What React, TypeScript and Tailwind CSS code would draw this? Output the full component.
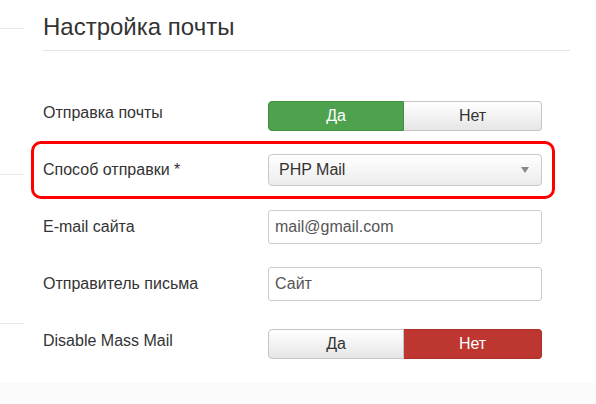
import React from "react";

type Toggle = "yes" | "no";

function YesNo({ value }: { value: Toggle }) {
  const yes = value === "yes";
  return (
    <div className="mt-[7px] flex h-[30px] w-[274px] text-[16px]">
      <div
        className={`flex w-[136px] items-center justify-center rounded-l-[4px] border ${
          yes
            ? "border-[#3f8f3f] bg-[#4ea24e] text-white"
            : "border-[#c5c5c5] bg-gradient-to-b from-white to-[#e6e6e6] text-[#333]"
        }`}
      >
        Да
      </div>
      <div
        className={`flex flex-1 items-center justify-center rounded-r-[4px] border border-l-0 ${
          yes
            ? "border-[#c5c5c5] bg-gradient-to-b from-white to-[#e6e6e6] text-[#333]"
            : "border-[#a92f29] bg-[#bd362f] text-white"
        }`}
      >
        Нет
      </div>
    </div>
  );
}

function TextBox({ value }: { value: string }) {
  return (
    <div className="flex h-[34px] w-[274px] items-center rounded-[3px] border border-[#cccccc] bg-white px-[6px] text-[16px] text-[#555]">
      {value}
    </div>
  );
}

function Row({ label, children }: { label: string; children: React.ReactNode }) {
  return (
    <div className="flex h-[57px] items-center">
      <div className="w-[225px] text-[16px] text-[#333]">{label}</div>
      {children}
    </div>
  );
}

export default function App() {
  return (
    <div
      className="relative h-[404px] w-[596px] overflow-hidden bg-white"
      style={{ fontFamily: '"Liberation Sans", Arial, sans-serif' }}
    >
      {/* stray separator lines from the neighbouring column */}
      <div className="absolute left-0 top-[28px] h-px w-[24px] bg-[#e8e8e8]" />
      <div className="absolute left-0 top-[174px] h-px w-[24px] bg-[#e8e8e8]" />
      <div className="absolute left-0 top-[323px] h-px w-[24px] bg-[#e8e8e8]" />

      <div className="pl-[43px] pr-[26px]">
        <h2 className="border-b border-[#e5e5e5] pb-[9px] pt-[12px] text-[24px] leading-[29px] text-[#333]">
          Настройка почты
        </h2>

        <div className="pt-[33px]">
          <Row label="Отправка почты">
            <YesNo value="yes" />
          </Row>

          <div className="relative">
            <div className="absolute -left-[12px] right-[15px] top-0 -bottom-[1px] rounded-[10px] border-[3px] border-[#ff0000]" />
            <Row label="Способ отправки *">
              <div className="flex h-[32px] w-[274px] items-center justify-between rounded-[4px] border border-[#c8c8c8] bg-gradient-to-b from-white to-[#ececec] pl-[10px] pr-[12px] text-[16px] text-[#333]">
                <span>PHP Mail</span>
                <span className="h-0 w-0 border-x-[4px] border-t-[6px] border-x-transparent border-t-[#888]" />
              </div>
            </Row>
          </div>

          <Row label="E-mail сайта">
            <TextBox value="mail@gmail.com" />
          </Row>
          <Row label="Отправитель письма">
            <TextBox value="Сайт" />
          </Row>
          <Row label="Disable Mass Mail">
            <YesNo value="no" />
          </Row>
        </div>
      </div>

      <div className="absolute bottom-0 left-0 right-0 h-[21px] bg-[#fbfbfb]" />
    </div>
  );
}
